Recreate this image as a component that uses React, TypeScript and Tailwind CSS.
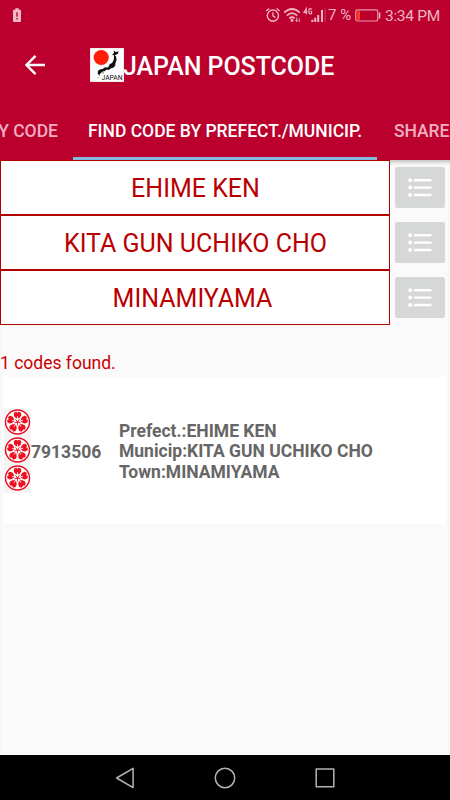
import React from "react";

function LowBattery() {
  return (
    <svg className="block h-[15px] w-[8px]" viewBox="0 0 8 15">
      <path d="M2.3 0.3h3.4v1.5H7.1q.9 0 .9.9v10.4q0 .9-.9.9H.9q-.9 0-.9-.9V2.7q0-.9.9-.9h1.4z" fill="#f0b9c6" />
      <path d="M3.3 4.2h1.4v4.6H3.3zM3.3 10h1.4v1.5H3.3z" fill="#bc002d" />
    </svg>
  );
}

function StatusIcons() {
  return (
    <svg className="block h-[20px] w-[64px]" viewBox="264 5 64 20" fill="none" stroke="#eeb5c3">
      <circle cx="272.9" cy="15.6" r="5.6" strokeWidth="1.4" />
      <path d="M272.9 12.2v3.7l2.6 1.6M266.2 11l3-2.6M279.6 11l-3-2.6" strokeWidth="1.3" />
      <path d="M284.2 12.6q7.8-7.2 15.6 0M286.8 15.6q5.2-4.8 10.4 0M289.3 18.4q2.7-2.3 5.4 0" strokeWidth="1.7" />
      <circle cx="292" cy="20.5" r="1.4" fill="#eeb5c3" stroke="none" />
      <path d="M296.7 17.5v4M295.4 20.2l1.3 1.4 1.3-1.4M299.2 22v-3.5" strokeWidth="0.9" />
      <path d="M306.3 14.3V8.6L304 12.4H307.4M311.6 9.8q0-1.1-1.3-1.1-1.4 0-1.4 1.4v2.4q0 1.4 1.4 1.4 1.3 0 1.3-1v-1.4h-1.2" strokeWidth="1.2" />
      <path d="M312.3 22v-2.3M315.2 22v-4.2M318.2 22v-7M322 22V10" strokeWidth="2" />
      <path d="M325.2 22V8.3" strokeWidth="1.4" opacity="0.25" />
    </svg>
  );
}

function BatteryLevel() {
  return (
    <svg className="block h-[13px] w-[26px]" viewBox="0 0 26 13">
      <rect x="0.8" y="0.8" width="21.9" height="11.2" rx="1.4" fill="none" stroke="#e79bab" strokeWidth="1.2" />
      <rect x="2.2" y="2.2" width="2.8" height="8.6" fill="#ff3b20" />
      <path d="M24.6 3.5v6" stroke="#eeb5c3" strokeWidth="1.5" />
    </svg>
  );
}

function JapanLogo() {
  return (
    <svg className="block size-[34px]" viewBox="0 0 34 34">
      <rect width="34" height="34" fill="#fdfdfd" stroke="#dcc8c0" strokeWidth="0.7" />
      <circle cx="11.2" cy="9.5" r="7.6" fill="#ff1c08" />
      <path
        d="M23.6 2.2l2.1 1.8 2.8-.5-.5 2.2-2.6 1.2-.7 1.4-.9-1.3-1.6.2.7-1.4 1.2-.7zM24 7.4l2 .9.6 3.8-1.2 3-.1 2.3-1.7 2.1-2.8 1.1-2.1 1.5-1.8-.5-2.5 1.6-1.7.3-2.1 1.7-1.3 1.8-1.6-1 .2-2.9 1.8-1.7 2.9-.3 2.5-1.9 2.9.2 1.8-3.5 2.3-1 1.7-3.1z"
        fill="#101010"
      />
      <path d="M7.6 30l.8-.8M9 28l.6-.8M12.3 25.3l1.6-.7" fill="none" stroke="#444" strokeWidth="0.8" />
      <text x="11.5" y="31.6" fontFamily="Roboto, sans-serif" fontSize="7" textLength="21" lengthAdjust="spacingAndGlyphs" fill="#111">JAPAN</text>
    </svg>
  );
}

const angles = [0, 72, 144, 216, 288];

function Blossom() {
  return (
    <svg className="block h-[28px] w-[27px]" viewBox="-13.5 -13 27 28">
      <circle r="12" fill="#fff" stroke="#e90c1c" strokeWidth="1.4" />
      {angles.map((angle) => (
        <g key={angle} transform={`rotate(${angle})`}>
          <path d="M0-3.2C-2.2-4.1-4.1-6-3.8-8.1-3.5-9.4-2.4-10.4-1.2-10.3L0-9.2 1.2-10.3C2.4-10.4 3.5-9.4 3.8-8.1 4.1-6 2.2-4.1 0-3.2Z" fill="#ee1020" />
          <path d="M0-5.8v3.2" stroke="#fff" strokeWidth="0.8" />
        </g>
      ))}
      {angles.map((angle) => (
        <path key={angle} transform={`rotate(${angle + 36})`} d="M0 0v-3.4" stroke="#ee1020" strokeWidth="0.8" />
      ))}
      <circle r="1" fill="#ee1020" />
    </svg>
  );
}

function SelectRow({ label, inset = "pl-px" }: { label: string; inset?: string }) {
  return (
    <div className="flex h-[55px]">
      <div className={`flex w-[390px] items-center justify-center border border-[#b00000] bg-white pt-[2px] text-[25px] text-[#b80000] ${inset}`}>
        <span className="whitespace-nowrap">{label}</span>
      </div>
      <button className="mt-[7px] ml-[5px] flex h-[41px] w-[50px] items-center justify-center rounded-[2px] bg-[#d6d7d7]">
        <svg className="block h-[19px] w-[24px]" viewBox="0 0 24 19" fill="#fff">
          <circle cx="2.2" cy="2.2" r="2" />
          <circle cx="2.2" cy="9.6" r="2" />
          <circle cx="2.2" cy="17" r="2" />
          <path d="M6 1h17.5v2.4H6zM6 8.4h17.5v2.4H6zM6 15.8h17.5v2.4H6z" />
        </svg>
      </button>
    </div>
  );
}

export default function App() {
  return (
    <div className="flex h-[800px] w-[450px] flex-col overflow-hidden bg-[#fafafa] font-[Roboto,sans-serif]">
      <header className="h-[160px] shrink-0 bg-[#bc002d]">
        <div className="flex h-[30px] items-center text-[15.5px] text-[#eeb5c3]">
          <div className="ml-[13px]"><LowBattery /></div>
          <div className="ml-[243px]"><StatusIcons /></div>
          <span className="w-[26px] whitespace-nowrap pt-px text-[15px]">7 %</span>
          <div className="ml-px"><BatteryLevel /></div>
          <span className="ml-[4px] whitespace-nowrap pt-[3px] tracking-[-0.3px]">3:34 PM</span>
        </div>
        <div className="flex h-[70px] items-center">
          <svg className="ml-[25px] block size-[20px]" viewBox="0 0 20 20" fill="none" stroke="#fff" strokeWidth="2.4">
            <path d="M20 10H2M10.5 .9L1.5 10l9 9.1" />
          </svg>
          <div className="ml-[45px]"><JapanLogo /></div>
          <h1 className="-ml-px whitespace-nowrap pt-[3px] text-[25px] font-medium tracking-[-0.05px] text-white">JAPAN POSTCODE</h1>
        </div>
        <nav className="flex h-[60px] text-[17.5px] font-medium text-[#eeb0c0]">
          <div className="flex w-[73px] items-center justify-end pt-[2px] pr-[15px]">
            <span className="whitespace-nowrap">Y CODE</span>
          </div>
          <div className="flex w-[304px] items-center justify-center border-b-[3px] border-[#82b9df] pt-[5px] text-white">
            <span className="whitespace-nowrap">FIND CODE BY PREFECT./MUNICIP.</span>
          </div>
          <div className="flex w-[73px] items-center pt-[2px] pl-[17px]">
            <span className="whitespace-nowrap tracking-[-0.1px]">SHARE</span>
          </div>
        </nav>
      </header>
      <main className="flex-1 shadow-[inset_0_5px_4px_-3px_#bbbbbb]">
        <SelectRow label="EHIME KEN" />
        <SelectRow label="KITA GUN UCHIKO CHO" />
        <SelectRow label="MINAMIYAMA" inset="pr-[5px]" />
        <p className="mt-[27px] h-[25px] whitespace-nowrap text-[17.5px] leading-[22px] text-[#c80000]">1 codes found.</p>
        <section className="mx-[4px] flex h-[147px] items-center bg-white text-[17.5px] font-bold text-[#666666]">
          <div className="bg-[#f4f4f4]">
            <Blossom />
            <Blossom />
            <Blossom />
          </div>
          <span className="w-[88px] pt-[3px]">7913506</span>
          <div className="whitespace-nowrap pt-[2px] leading-[20.5px]">
            <p>Prefect.:EHIME KEN</p>
            <p>Municip:KITA GUN UCHIKO CHO</p>
            <p>Town:MINAMIYAMA</p>
          </div>
        </section>
      </main>
      <footer className="flex h-[45px] shrink-0 items-center bg-black">
        <svg className="ml-[115px] block h-[22px] w-[220px]" viewBox="115 0 220 22" fill="none" stroke="#b4b4b4" strokeWidth="1.5" strokeLinejoin="round">
          <path d="M133.1 1.3v19.3L116.6 11z" />
          <circle cx="225" cy="11" r="9.7" />
          <rect x="316.2" y="2.1" width="17.6" height="17.6" />
        </svg>
      </footer>
    </div>
  );
}
